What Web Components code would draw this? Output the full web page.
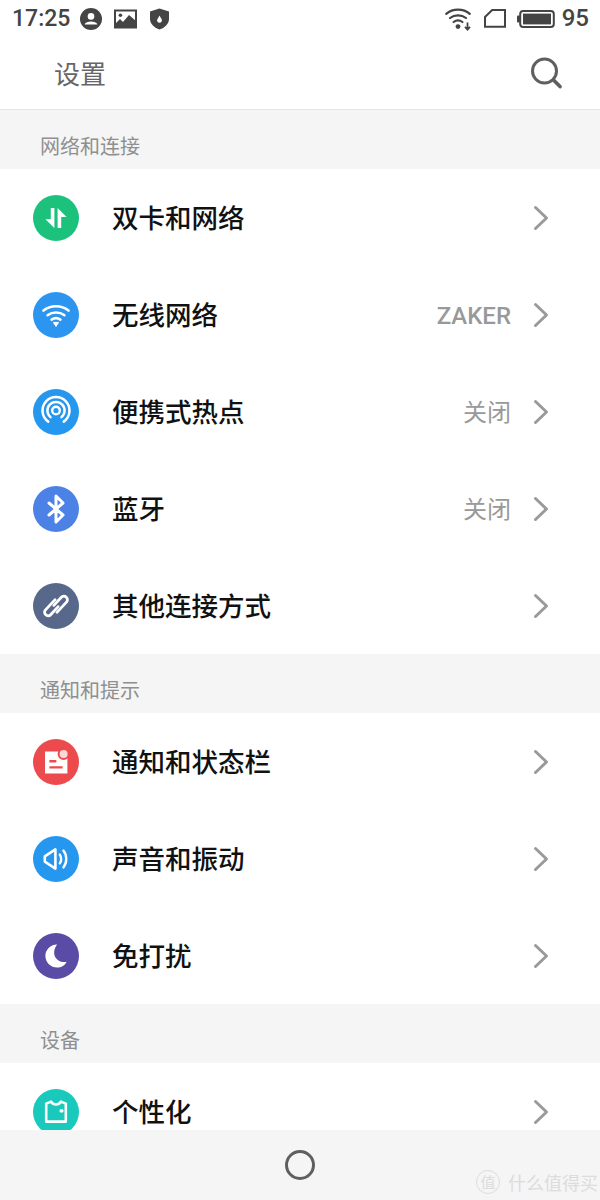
<!DOCTYPE html>
<html lang="zh">
<head>
<meta charset="utf-8">
<title>设置</title>
<style>
  html, body { margin: 0; height: 100%; background: #f5f5f5; }
  body { font-family: "Noto Sans CJK SC", "Roboto", sans-serif; overflow: hidden; }
  settings-app { height: 1200px; }
</style>
</head>
<body>
<settings-app>
  <status-bar></status-bar>
  <title-bar>设置</title-bar>
  <section-label>网络和连接</section-label>
  <setting-group>
    <setting-row icon="data" color="#1cc27c">双卡和网络</setting-row>
    <setting-row icon="wifi" color="#2b95f0" value="ZAKER">无线网络</setting-row>
    <setting-row icon="hotspot" color="#2597ee" value="关闭">便携式热点</setting-row>
    <setting-row icon="bluetooth" color="#4c82e6" value="关闭">蓝牙</setting-row>
    <setting-row icon="link" color="#57688a">其他连接方式</setting-row>
  </setting-group>
  <section-label>通知和提示</section-label>
  <setting-group>
    <setting-row icon="notice" color="#ec4a4c">通知和状态栏</setting-row>
    <setting-row icon="sound" color="#2597ee">声音和振动</setting-row>
    <setting-row icon="moon" color="#5a4ca6">免打扰</setting-row>
  </setting-group>
  <section-label>设备</section-label>
  <setting-group>
    <setting-row icon="shirt" color="#19c9bb">个性化</setting-row>
  </setting-group>
  <nav-bar slot="nav"></nav-bar>
</settings-app>

<script>
// icon bodies, all on a 46x46 box, drawn white on the coloured circle
const ICONS = {
  data: `<path d="M17.8 13H21.4V33L12.4 24.2H17.8Z" fill="#fff"/>
         <path d="M24.6 33H28.2V22H33.6L24.6 13Z" fill="#fff"/>`,
  wifi: `<g fill="none" stroke="#fff" stroke-width="2.6" stroke-linecap="round">
           <path d="M10.5 18.6C17.6 12.8 28.4 12.8 35.5 18.6"/>
           <path d="M14.6 23.2C19.4 19.6 26.6 19.6 31.4 23.2"/>
           <path d="M18.6 27.6C21.2 25.8 24.8 25.8 27.4 27.6"/>
         </g>
         <path d="M20.4 30.4H25.6L23 34.4Z" fill="#fff" stroke="#fff" stroke-linejoin="round"/>`,
  hotspot: `<g fill="none" stroke="#fff" stroke-linecap="round">
           <circle cx="23" cy="21.5" r="3.8" stroke-width="2.4"/>
           <path d="M17.5 28.1A8.6 8.6 0 1 1 28.5 28.1" stroke-width="2.5"/>
           <path d="M15.3 32.6A13.5 13.5 0 1 1 30.7 32.6" stroke-width="2.5"/>
         </g>`,
  bluetooth: `<path d="M16 17L30 29L23 36V10L30 17L16 29" fill="none" stroke="#fff" stroke-width="3" stroke-linejoin="round" stroke-linecap="round"/>`,
  link: `<g transform="translate(23 23) rotate(-47)" fill="none" stroke="#fff" stroke-width="2.8" stroke-linecap="round">
           <path d="M4 -5H-10A3.5 3.5 0 0 0 -10 2H1"/>
           <path d="M-4 5H10A3.5 3.5 0 0 0 10 -2H-1"/>
         </g>`,
  notice: `<path fill-rule="evenodd" fill="#fff" d="M12 12.6H34.4V34.4H12ZM16.4 21V23.4H23.4V21ZM16.4 27.2V29.6H29.6V27.2Z"/>
           <circle cx="30.6" cy="15" r="5" fill="#fbd8d8" stroke="#ec4a4c" stroke-width="2"/>`,
  sound: `<path d="M22.4 13.4V32.6L11.8 25.6V20.4Z" fill="none" stroke="#fff" stroke-width="2.6" stroke-linejoin="round"/>
          <g fill="none" stroke="#fff" stroke-width="2.4" stroke-linecap="round">
            <path d="M26.8 18.6C28.6 21 28.6 25 26.8 27.4"/>
            <path d="M30.4 14.6C34.2 19.4 34.2 26.6 30.4 31.4"/>
          </g>`,
  moon: `<path d="M24.2 11.4C16.6 11.4 12.4 17.4 12.4 22.8C12.4 29.6 17.8 34.6 24 34.6C28.4 34.6 32 32.4 33.6 28.8C27.4 30 20.4 26 21.2 18.4C21.5 15.6 22.6 13.2 24.2 11.4Z" fill="#fff"/>`,
  shirt: `<path d="M13.2 14.6L18 12.6C19.6 16.4 26.4 16.4 28 12.6L32.8 14.6V32.6H13.2Z" fill="none" stroke="#fff" stroke-width="2.6" stroke-linejoin="round"/>
          <rect x="26.6" y="20.2" width="3.8" height="3.4" rx="1" fill="#fff"/>`
};

class SettingsApp extends HTMLElement {
  constructor() {
    super();
    const shadow = this.attachShadow({mode: 'open'});
    shadow.innerHTML = `
      <style>
        :host { display: flex; flex-direction: column; background: #f5f5f5; }
        .scroll { flex: 1; min-height: 0; overflow: hidden; display: flex; flex-direction: column; }
        .scroll ::slotted(*) { flex: none; }
      </style>
      <div class="scroll"><slot></slot></div>
      <slot name="nav"></slot>
    `;
  }
}

class StatusBar extends HTMLElement {
  constructor() {
    super();
    const shadow = this.attachShadow({mode: 'open'});
    shadow.innerHTML = `
      <style>
        :host { display: flex; align-items: center; height: 37px; padding: 0 11px 0 12px; background: #fff; color: #444;
                font: 500 23px/37px Roboto, sans-serif; }
        .left, .right { display: flex; align-items: center; }
        .left { flex: 1; }
        svg { display: block; }
      </style>
      <div class="left">
        <span>17:25</span>
        <svg style="margin-left:10px" width="22" height="22" viewBox="0 0 22 22">
          <circle cx="11" cy="11" r="11" fill="#444"/>
          <circle cx="11" cy="8.4" r="3.3" fill="#fff"/>
          <path d="M4.8 16C6 12.6 16 12.6 17.2 16V16.4H4.8Z" fill="#fff"/>
        </svg>
        <svg style="margin-left:12px" width="23" height="20" viewBox="0 0 23 20">
          <rect x="1" y="1.5" width="21" height="17" fill="none" stroke="#444" stroke-width="2"/>
          <path d="M1 18.5V15L6 10L9 13L15 6L22 12V18.5Z" fill="#444"/>
          <circle cx="6.4" cy="6.2" r="1.8" fill="#444"/>
        </svg>
        <svg style="margin-left:13px" width="19" height="22" viewBox="0 0 19 22">
          <path d="M9.5 0.5L19 3.4V11C19 16 14.5 20 9.5 21.5C4.5 20 0 16 0 11V3.4Z" fill="#444"/>
          <path d="M9.5 7.6L11.6 11.2A2.4 2.4 0 1 1 7.4 11.2Z" fill="#fff"/>
        </svg>
      </div>
      <div class="right">
        <svg width="28" height="24" viewBox="0 0 28 24">
          <g fill="none" stroke="#444" stroke-width="2.2" stroke-linecap="round">
            <path d="M1.2 6.8C7.8 1.2 18.2 1.2 24.8 6.8"/>
            <path d="M5 11C9.6 7.4 16.4 7.4 21 11"/>
            <path d="M8.6 15C11.2 13 14.8 13 17.4 15"/>
          </g>
          <circle cx="13" cy="19.6" r="2.4" fill="#444"/>
          <path d="M22.5 15.5V22M20 19.8L22.5 22.6L25 19.8" fill="none" stroke="#444" stroke-width="1.8"/>
        </svg>
        <svg style="margin-left:11px" width="22" height="19" viewBox="0 0 22 19">
          <path d="M1 17.8V8L8.2 1H21V17.8Z" fill="none" stroke="#444" stroke-width="2"/>
        </svg>
        <svg style="margin-left:11px" width="38" height="18" viewBox="0 0 38 18">
          <rect x="0" y="5.5" width="3" height="7" rx="1" fill="#444"/>
          <rect x="3.2" y="1" width="33.6" height="16" rx="3" fill="none" stroke="#444" stroke-width="2"/>
          <rect x="6" y="3.6" width="28" height="10.8" fill="#444"/>
        </svg>
        <span style="margin-left:7px; font-size:24px">95</span>
      </div>
    `;
  }
}

class TitleBar extends HTMLElement {
  constructor() {
    super();
    const shadow = this.attachShadow({mode: 'open'});
    shadow.innerHTML = `
      <style>
        :host { display: flex; align-items: center; justify-content: space-between; height: 72px; padding: 0 38px 0 54px;
                background: #fff; border-bottom: 1px solid #e4e4e4; color: #666; font-size: 26px; line-height: 70px; }
        svg { display: block; }
      </style>
      <span><slot></slot></span>
      <svg width="32" height="32" viewBox="0 0 32 32">
        <circle cx="14.5" cy="14" r="12" fill="none" stroke="#5f5f5f" stroke-width="3"/>
        <path d="M23.5 23L30 29.6" stroke="#5f5f5f" stroke-width="3.6" stroke-linecap="round"/>
      </svg>
    `;
  }
}

class SectionLabel extends HTMLElement {
  constructor() {
    super();
    const shadow = this.attachShadow({mode: 'open'});
    shadow.innerHTML = `
      <style>
        :host { display: block; height: 59px; padding-left: 40px; background: #f5f5f5; color: #8f8f8f;
                font-size: 20px; line-height: 71px; box-sizing: border-box; overflow: hidden; }
      </style>
      <slot></slot>
    `;
  }
}

class SettingGroup extends HTMLElement {
  constructor() {
    super();
    const shadow = this.attachShadow({mode: 'open'});
    shadow.innerHTML = `
      <style>:host { display: block; background: #fff; }</style>
      <slot></slot>
    `;
  }
}

class SettingRow extends HTMLElement {
  constructor() {
    super();
    const shadow = this.attachShadow({mode: 'open'});
    const value = this.getAttribute('value');
    const isLatin = value && /^[A-Z]+$/.test(value);
    shadow.innerHTML = `
      <style>
        :host { display: flex; align-items: center; height: 97px; padding: 0 51px 0 33px; background: #fff; color: #111;
                font-size: 26.5px; font-weight: 500; }
        .dot { flex: none; width: 46px; height: 46px; border-radius: 50%; }
        .dot svg { display: block; }
        .label { flex: 1; margin-left: 33px; padding-bottom: 2px; }
        .value { color: #999; font-size: 24px; font-weight: 400; margin-right: 22px; padding-bottom: 2px; }
        .value.latin { font: 500 24px Roboto, sans-serif; padding: 2px 0 0; }
        .chev { display: block; flex: none; }
      </style>
      <div class="dot" style="background:${this.getAttribute('color')}">
        <svg width="46" height="46" viewBox="0 0 46 46">${ICONS[this.getAttribute('icon')]}</svg>
      </div>
      <span class="label"><slot></slot></span>
      ${value ? `<span class="value${isLatin ? ' latin' : ''}">${value}</span>` : ''}
      <svg class="chev" width="16" height="26" viewBox="0 0 16 26">
        <path d="M2.5 2.5L13.5 13L2.5 23.5" fill="none" stroke="#9a9a9a" stroke-width="3" stroke-linecap="round" stroke-linejoin="round"/>
      </svg>
    `;
  }
}

class NavBar extends HTMLElement {
  constructor() {
    super();
    const shadow = this.attachShadow({mode: 'open'});
    shadow.innerHTML = `
      <style>
        :host { display: flex; flex: none; align-items: center; justify-content: center; height: 70px; background: #f5f5f5; position: relative; }
        .home { width: 30px; height: 30px; border: 3px solid #5f5f5f; border-radius: 50%; box-sizing: border-box; }
        /* site watermark, sits over the bar */
        .mark { position: absolute; left: 476px; top: 40px; display: flex; align-items: center; gap: 8px; color: #dcdcdc; font-size: 18px; line-height: 24px; }
        .seal { width: 22px; height: 22px; border: 1px solid #dcdcdc; border-radius: 50%; font-size: 15px; line-height: 21px; text-align: center; }
      </style>
      <div class="home"></div>
      <div class="mark"><span class="seal">值</span><span>什么值得买</span></div>
    `;
  }
}

customElements.define('settings-app', SettingsApp);
customElements.define('status-bar', StatusBar);
customElements.define('title-bar', TitleBar);
customElements.define('section-label', SectionLabel);
customElements.define('setting-group', SettingGroup);
customElements.define('setting-row', SettingRow);
customElements.define('nav-bar', NavBar);
</script>
</body>
</html>
